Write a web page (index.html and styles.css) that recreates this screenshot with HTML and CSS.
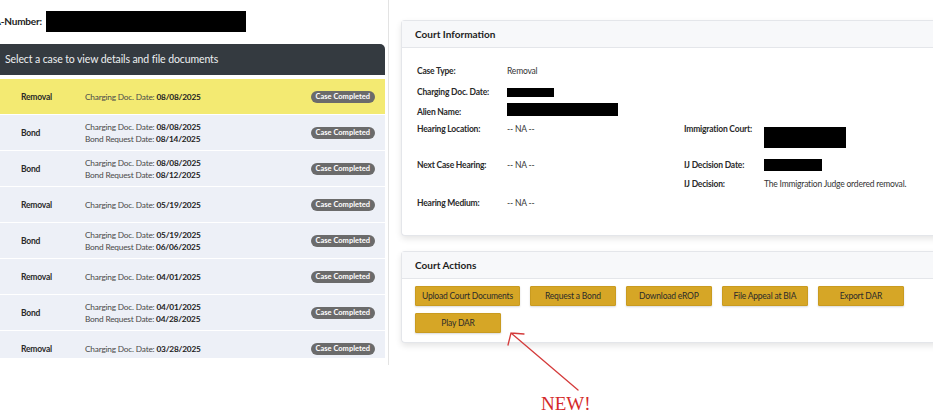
FILE: index.html
```html
<!DOCTYPE html>
<html lang="en">
<head>
    <meta charset="UTF-8">
    <title>Case Portal</title>
    <link rel="stylesheet" href="styles.css">
</head>
<body>
    <div class="page">
        <div class="left-col">
            <div class="a-number">
                <span class="a-label">A-Number:</span>
                <span class="redact a-redact"></span>
            </div>

            <div class="case-panel">
                <div class="case-header">Select a case to view details and file documents</div>
                <div class="case-list">
                    <div class="case-row selected">
                        <span class="case-type">Removal</span>
                        <div class="case-dates">
                            <div>Charging Doc. Date: <b>08/08/2025</b></div>
                        </div>
                        <span class="badge">Case Completed</span>
                    </div>
                    <div class="case-row">
                        <span class="case-type">Bond</span>
                        <div class="case-dates">
                            <div>Charging Doc. Date: <b>08/08/2025</b></div>
                            <div>Bond Request Date: <b>08/14/2025</b></div>
                        </div>
                        <span class="badge">Case Completed</span>
                    </div>
                    <div class="case-row">
                        <span class="case-type">Bond</span>
                        <div class="case-dates">
                            <div>Charging Doc. Date: <b>08/08/2025</b></div>
                            <div>Bond Request Date: <b>08/12/2025</b></div>
                        </div>
                        <span class="badge">Case Completed</span>
                    </div>
                    <div class="case-row">
                        <span class="case-type">Removal</span>
                        <div class="case-dates">
                            <div>Charging Doc. Date: <b>05/19/2025</b></div>
                        </div>
                        <span class="badge">Case Completed</span>
                    </div>
                    <div class="case-row">
                        <span class="case-type">Bond</span>
                        <div class="case-dates">
                            <div>Charging Doc. Date: <b>05/19/2025</b></div>
                            <div>Bond Request Date: <b>06/06/2025</b></div>
                        </div>
                        <span class="badge">Case Completed</span>
                    </div>
                    <div class="case-row">
                        <span class="case-type">Removal</span>
                        <div class="case-dates">
                            <div>Charging Doc. Date: <b>04/01/2025</b></div>
                        </div>
                        <span class="badge">Case Completed</span>
                    </div>
                    <div class="case-row">
                        <span class="case-type">Bond</span>
                        <div class="case-dates">
                            <div>Charging Doc. Date: <b>04/01/2025</b></div>
                            <div>Bond Request Date: <b>04/28/2025</b></div>
                        </div>
                        <span class="badge">Case Completed</span>
                    </div>
                    <div class="case-row">
                        <span class="case-type">Removal</span>
                        <div class="case-dates">
                            <div>Charging Doc. Date: <b>03/28/2025</b></div>
                        </div>
                        <span class="badge">Case Completed</span>
                    </div>
                </div>
            </div>
        </div>

        <div class="right-col">
            <div class="card info-card">
                <div class="card-header">Court Information</div>
                <div class="info-grid">
                    <span class="info-label r1">Case Type:</span>
                    <span class="info-value r1">Removal</span>

                    <span class="info-label r2">Charging Doc. Date:</span>
                    <span class="info-value r2"><span class="redact date-redact"></span></span>

                    <span class="info-label r3">Alien Name:</span>
                    <span class="info-value r3"><span class="redact name-redact"></span></span>

                    <span class="info-label r4">Hearing Location:</span>
                    <span class="info-value r4">-- NA --</span>
                    <span class="info-label r4 c3">Immigration Court:</span>
                    <span class="info-value r4 c4"><span class="redact court-redact"></span></span>

                    <span class="info-label r5">Next Case Hearing:</span>
                    <span class="info-value r5">-- NA --</span>
                    <span class="info-label r5 c3">IJ Decision Date:</span>
                    <span class="info-value r5 c4"><span class="redact ij-redact"></span></span>

                    <span class="info-label r6 c3">IJ Decision:</span>
                    <span class="info-value r6 c4">The Immigration Judge ordered removal.</span>

                    <span class="info-label r7">Hearing Medium:</span>
                    <span class="info-value r7">-- NA --</span>
                </div>
            </div>

            <div class="card actions-card">
                <div class="card-header">Court Actions</div>
                <div class="action-buttons">
                    <button class="action-button wide">Upload Court Documents</button>
                    <button class="action-button">Request a Bond</button>
                    <button class="action-button">Download eROP</button>
                    <button class="action-button">File Appeal at BIA</button>
                    <button class="action-button">Export DAR</button>
                    <button class="action-button">Play DAR</button>
                </div>
            </div>
        </div>
    </div>

    <!-- annotation drawn over the screenshot -->
    <svg class="new-arrow" width="933" height="415" viewBox="0 0 933 415">
        <path d="M578 390 L511 333 M511 333 L524 334 M511 333 L508 345" fill="none" stroke="#d43b3b" stroke-width="1.3" stroke-linecap="round"/>
    </svg>
    <div class="new-label">NEW!</div>
</body>
</html>
```

FILE: styles.css
```css
:root {
    --dark-header: #343a40;
    --row-bg: #edf0f7;
    --row-selected: #f3ea72;
    --badge-bg: #6b6b6b;
    --gold: #d6a626;
    --card-border: #e4e6ea;
    --card-head: #f7f8fa;
    --text: #222;
}

html, body {
    margin: 0;
    height: 100%;
    overflow: hidden;
}

body {
    background: #fff;
    color: var(--text);
    font-family: Lato, "Open Sans", sans-serif;
    position: relative;
}

.page {
    display: flex;
    align-items: flex-start;
}

/* left column */
.left-col {
    width: 388px;
    height: 365px;
    border-right: 1px solid #e3e3e3;
    flex-shrink: 0;
}

.a-number {
    height: 44px;
    display: flex;
    align-items: center;
    gap: 4px;
    margin-left: -6px;
    padding-bottom: 2px;
    box-sizing: border-box;
}

.a-label {
    font-weight: 700;
    font-size: 10px;
    letter-spacing: -0.2px;
}

.redact {
    display: block;
    background: #000;
}

.a-redact {
    width: 200px;
    height: 21px;
}

.case-panel {
    width: 385px;
}

.case-header {
    background: var(--dark-header);
    color: #eef0f2;
    height: 31px;
    line-height: 31px;
    padding-left: 5px;
    font-size: 10.5px;
    letter-spacing: -0.1px;
    border-top-right-radius: 5px;
    margin-bottom: 4px;
}

.case-list {
    height: 279px;
    overflow: hidden;
}

.case-row {
    display: flex;
    align-items: center;
    height: 35px;
    border-bottom: 1px solid #fff;
    background: var(--row-bg);
    padding: 0 10px 0 21px;
    font-size: 8.3px;
    letter-spacing: -0.2px;
}

.case-row.selected {
    background: var(--row-selected);
}

.case-type {
    width: 64px;
    font-weight: 700;
    font-size: 8.5px;
    color: #2a2a2a;
}

.case-dates {
    flex: 1;
    line-height: 12px;
    color: #4a4a4a;
}

.case-dates b {
    color: #222;
}

.badge {
    background: var(--badge-bg);
    color: #fff;
    font-size: 7.5px;
    font-weight: 700;
    letter-spacing: 0;
    padding: 1px 5px;
    line-height: 10px;
    border-radius: 7px;
}

/* right column */
.right-col {
    padding-left: 12px;
    padding-top: 20px;
}

.card {
    width: 560px;
    border: 1px solid var(--card-border);
    border-right: none;
    border-radius: 4px 0 0 4px;
    box-shadow: 0 3px 6px rgba(0, 0, 0, 0.1);
    background: #fff;
}

.card-header {
    background: var(--card-head);
    border-bottom: 1px solid var(--card-border);
    height: 26px;
    line-height: 26px;
    padding-left: 13px;
    font-weight: 700;
    font-size: 10px;
    color: #1d1d1d;
}

.info-grid {
    display: grid;
    grid-template-columns: 90px 177px 80px 1fr;
    grid-template-rows: 21px 20px 17px 36px 19px 19px 18px;
    padding: 14px 0 23px 15px;
    font-size: 8.5px;
    letter-spacing: -0.2px;
    line-height: 18px;
}

.info-label {
    font-weight: 700;
    color: #2a2a2a;
    grid-column: 1;
}

.info-value {
    grid-column: 2;
    color: #333;
}

.info-label.c3 { grid-column: 3; }
.info-value.c4 { grid-column: 4; }

.r1 { grid-row: 1; }
.r2 { grid-row: 2; }
.r3 { grid-row: 3; }
.r4 { grid-row: 4; }
.r5 { grid-row: 5; }
.r6 { grid-row: 6; }
.r7 { grid-row: 7; }

.date-redact {
    width: 47px;
    height: 9px;
    margin-top: 5px;
}

.name-redact {
    width: 111px;
    height: 13px;
}

.court-redact {
    width: 82px;
    height: 21px;
    margin-top: 7px;
}

.ij-redact {
    width: 58px;
    height: 12px;
    margin-top: 3px;
}

.actions-card {
    margin-top: 15px;
}

.action-buttons {
    display: flex;
    flex-wrap: wrap;
    gap: 7px 10px;
    width: 495px;
    padding: 7px 0 9px 13px;
}

.action-button {
    background: var(--gold);
    border: 1px solid #c99b20;
    border-radius: 1px;
    box-shadow: 0 1px 2px rgba(0, 0, 0, 0.15);
    height: 20px;
    min-width: 86px;
    padding: 0 8px;
    font-family: inherit;
    font-size: 8.5px;
    letter-spacing: -0.2px;
    color: #2b2b2b;
}

.action-button.wide {
    padding: 0 6px;
}

/* annotation */
.new-arrow {
    position: absolute;
    left: 0;
    top: 0;
    pointer-events: none;
}

.new-label {
    position: absolute;
    left: 541px;
    top: 394px;
    font-family: "Liberation Serif", serif;
    font-size: 19px;
    color: #d42a2a;
    line-height: 19px;
}
```
